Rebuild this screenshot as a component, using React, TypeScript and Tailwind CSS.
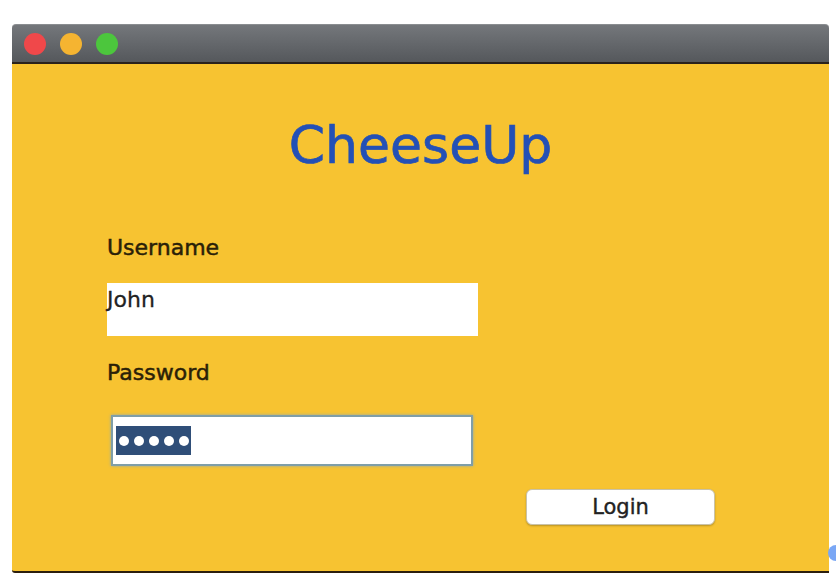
import React from "react";

const font = { fontFamily: '"DejaVu Sans", "Noto Sans", sans-serif' };

function TrafficLights() {
  return (
    <div className="flex items-center gap-[14px] pl-[12px] h-full">
      <span className="w-[22px] h-[22px] rounded-full bg-[#f0484a]" />
      <span className="w-[22px] h-[22px] rounded-full bg-[#f5b431]" />
      <span className="w-[22px] h-[22px] rounded-full bg-[#4cc63d]" />
    </div>
  );
}

export default function App() {
  return (
    <div className="relative w-[836px] h-[586px] bg-white overflow-hidden" style={font}>
      <div className="ml-[12px] pt-[24px] w-[817px]">
        {/* title bar */}
        <div className="h-[40px] rounded-t-[4px] bg-gradient-to-b from-[#74777b] to-[#55585c] border-t border-[#8a8d90] border-b-2 border-b-[#2a221c]">
          <TrafficLights />
        </div>

        {/* window body */}
        <div className="h-[509px] bg-[#f7c331] border-b-2 border-[#2b1e0e] rounded-bl-[3px] pl-[95px] pt-[55px] flex flex-col items-start">
          <h1 className="self-stretch -ml-[95px] text-center text-[52px] leading-none text-[#2350b6] [-webkit-text-stroke:0.7px_#2350b6]">
            CheeseUp
          </h1>

          <div className="mt-[66px] text-[22px] leading-none text-[#2a1f08] [-webkit-text-stroke:0.5px_#2a1f08]">
            Username
          </div>
          <div className="mt-[24px] w-[371px] h-[53px] bg-white text-[22px] leading-none text-[#222] pt-[6px] [-webkit-text-stroke:0.3px_#222]">
            John
          </div>

          <div className="mt-[26px] text-[22px] leading-none text-[#2a1f08] [-webkit-text-stroke:0.5px_#2a1f08]">
            Password
          </div>
          <div className="mt-[31px] ml-[4px] w-[362px] h-[51px] bg-white border-2 border-[#7f9ea8] shadow-[0_0_3px_#8fa9b0] pl-[3px] pt-[9px]">
            <div className="w-[75px] h-[29px] bg-[#2f4e78] flex items-center justify-center gap-[5px]">
              <span className="w-[10px] h-[10px] rounded-full bg-white" />
              <span className="w-[10px] h-[10px] rounded-full bg-white" />
              <span className="w-[10px] h-[10px] rounded-full bg-white" />
              <span className="w-[10px] h-[10px] rounded-full bg-white" />
              <span className="w-[10px] h-[10px] rounded-full bg-white" />
            </div>
          </div>

          <button className="mt-[23px] ml-[419px] w-[189px] h-[36px] bg-white rounded-[6px] border border-[#c9c2a8] shadow-[0_1px_2px_rgba(0,0,0,0.25)] text-[21px] leading-none text-[#222] [-webkit-text-stroke:0.4px_#222]">
            Login
          </button>
        </div>
      </div>

      <span className="absolute left-[828px] top-[545px] w-[16px] h-[16px] rounded-full bg-[#7aa7f5]" />
    </div>
  );
}
